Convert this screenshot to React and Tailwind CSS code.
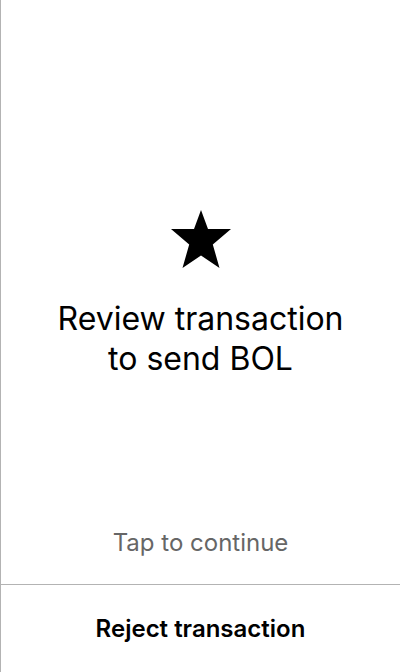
export default function App() {
  return (
    <div
      className="flex h-[672px] w-[400px] flex-col border-l border-[#b3b3b3] bg-white text-black"
      style={{ fontFamily: "Inter, 'Noto Sans', sans-serif" }}
    >
      <main className="flex flex-1 flex-col">
        <div className="flex flex-1 flex-col items-center justify-center pt-[62px]">
          <svg width="62" height="60" viewBox="0 0 62 60" className="mb-[30px]">
            <polygon
              fill="#000"
              points="31,1 38,20 61,20 42.8,35.5 49.5,59 31,46.5 12.5,59 19.2,35.5 1,20 24,20"
            />
          </svg>
          <h1 className="text-center text-[32px] leading-[40px] font-normal">
            Review transaction
            <br />
            to send BOL
          </h1>
        </div>
        <p className="pb-[23px] text-center text-[24px] leading-[36px] text-[#666]">Tap to continue</p>
      </main>
      <footer className="flex h-[88px] items-center justify-center border-t border-[#b3b3b3]">
        <button className="text-[24px] font-semibold">Reject transaction</button>
      </footer>
    </div>
  );
}
